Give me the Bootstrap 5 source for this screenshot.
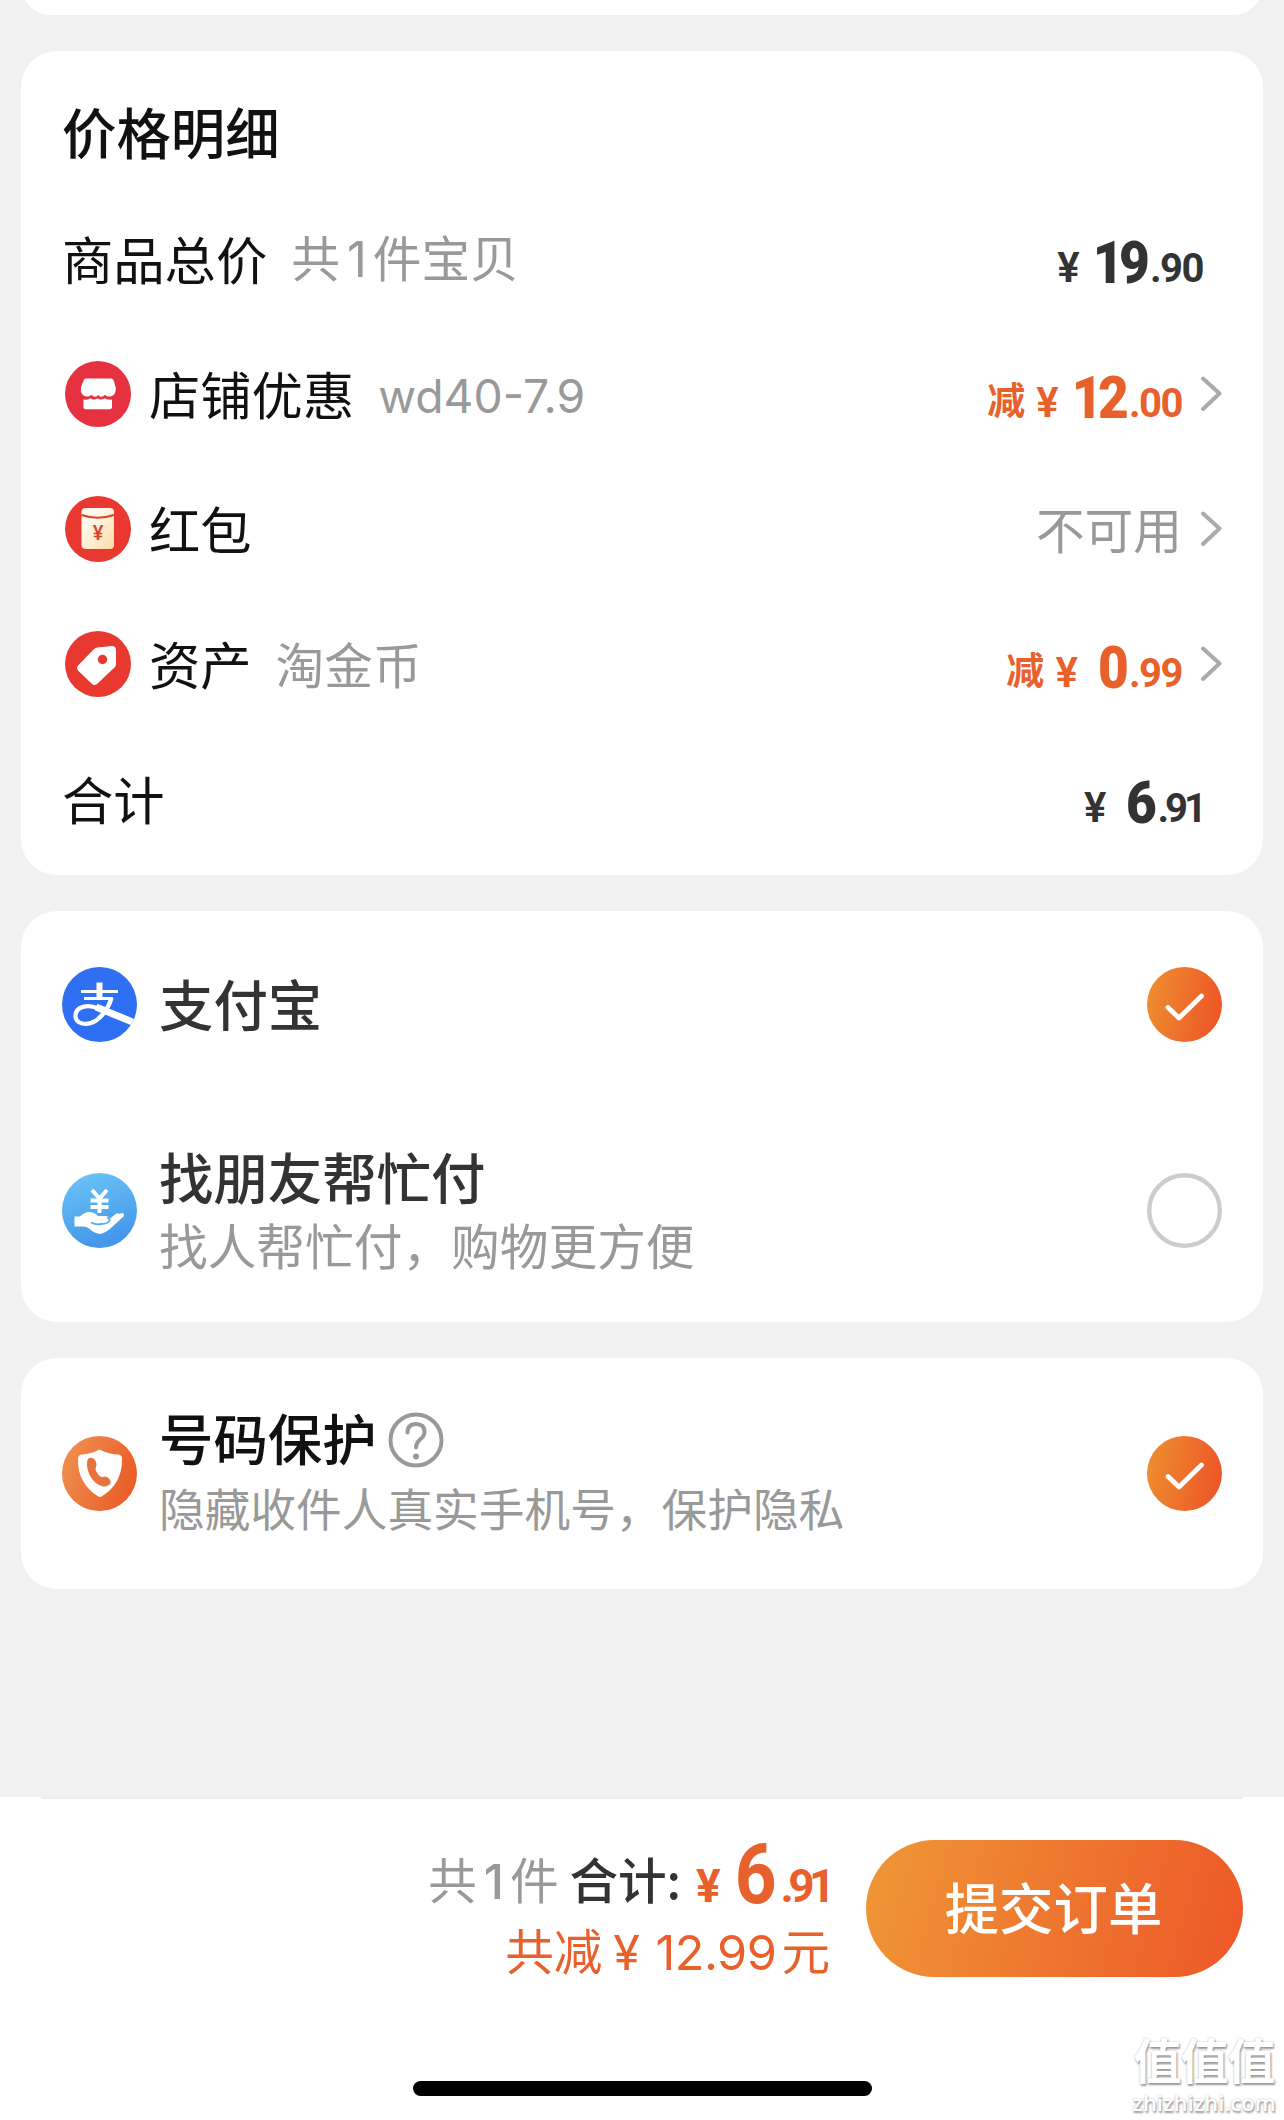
<!DOCTYPE html>
<html lang="zh-CN">
  <head>
    <meta charset="UTF-8" />
    <meta name="viewport" content="width=device-width, initial-scale=1" />
    <title>确认订单</title>
    <link
      href="https://cdn.jsdelivr.net/npm/bootstrap@5.3.3/dist/css/bootstrap.min.css"
      rel="stylesheet"
    />
    <style>
      body {
        background: #f1f1f1;
        color: #111;
        font-family: "Noto Sans CJK SC", sans-serif;
        overflow-x: hidden;
      }
      .page { width: 1284px; height: 2120px; overflow: hidden; }
      .panel { margin: 0 21px; border-radius: 36px; }
      .panel-prev { height: 60px; margin-top: -45px; }
      .panel-gap { margin-top: 36px; }
      .inner { padding-left: 41px; padding-right: 41px; }

      /* Rincian harga */
      .rincian { height: 824px; }
      .title { height: 140.5px; padding-top: 19px; line-height: 122px; font-size: 54.4px; font-weight: 500; }
      .line { height: 135px; }
      .line-icon { width: 66px; height: 66px; margin: 0 18px 0 3px; }
      .label { font-size: 51.3px; line-height: 60px; padding-bottom: 3px; }
      .note { font-size: 48.7px; line-height: 60px; padding-bottom: 3px; margin-left: 24px; color: #999; }
      .latin { font-family: Inter, sans-serif; }
      .one { margin: 0 6px 0 7px; }
      .wd { font-size: 46.3px; padding: 3px 0 0; }
      .price { font: 700 59px/60px Roboto, sans-serif; padding-top: 7px; color: #333; }
      .price b { display: inline-block; letter-spacing: -5px; transform: scaleX(0.9); transform-origin: right; }
      .price small, .price i { font-style: normal; line-height: 0; vertical-align: 1px; }
      .price small { font-size: 40px; letter-spacing: -1.5px; margin-left: 5px; }
      .price .tight { letter-spacing: -4px; }
      .price i { font-size: 42px; font-weight: 600; margin-right: 7px; }
      .price .solo { margin-right: 17px; }
      .price-end { margin-right: 19px; }
      .cut { font: 700 38px/0 "Noto Sans CJK SC", sans-serif; vertical-align: 4px; margin-right: 11px; }
      .orange { color: #e8602c !important; }
      .arrow { width: 22px; height: 36px; margin-left: 18px; }

      /* Metode bayar */
      .name { font-size: 54.4px; line-height: 70px; font-weight: 500; color: #333; }
      .desc { font-size: 48.7px; line-height: 66px; color: #999; }
      .desc-sm { font-size: 45.7px; line-height: 70px; }
      .texts { margin-left: 22px; padding-bottom: 3px; }
      .pick { width: 75px; height: 75px; }
      .help { width: 56px; height: 56px; margin: 5px 0 0 11px; }

      /* Bar bawah */
      .bottom { height: 323px; }
      .hair { height: 2px; margin: 0 41px; background: #ededed; }
      .bar { height: 178px; padding: 41px 41px 0 0; }
      .sum { font-size: 48.6px; line-height: 72px; margin-right: 36px; padding-top: 2px; }
      .sum .big {
        display: inline-block; font: 700 83px/0 Roboto, sans-serif; vertical-align: -4px;
        margin: 0 4px 0 8px; transform: scaleX(0.88); transform-origin: right;
      }
      .sum .mid { font: 700 46px/0 Roboto, sans-serif; vertical-align: -3px; letter-spacing: -5.5px; }
      .sum .yen { margin-left: 15px; letter-spacing: 0; }
      .saved { line-height: 62px; }
      .submit {
        width: 377px; height: 137px; border: 0; color: #fff;
        font-size: 54.4px; font-weight: 500; padding: 0 14px 6px 12px;
        background: linear-gradient(105deg, #ef9736, #ed5728);
      }
      .submit:hover { color: #fff; }
      .home { width: 459px; height: 15px; margin-top: 104px; }
      .stamp {
        right: 7px; bottom: 6px; width: 146px; color: #fff; text-align: center;
        text-shadow: 1px 2px 2px #999, 0 0 2px #bbb; white-space: nowrap;
      }
      .stamp b { font: 700 48px/55px "Liberation Sans", "Noto Sans CJK SC", sans-serif; letter-spacing: -1px; }
      .stamp span { font: 600 22px/24px "Open Sans", sans-serif; }
    </style>
  </head>
  <body>
    <div class="page position-relative d-flex flex-column">
      <div class="panel panel-prev bg-white flex-shrink-0"></div>

      <!-- Harga -->
      <section class="panel panel-gap inner rincian bg-white">
        <div class="title">价格明细</div>

        <div class="line d-flex align-items-center">
          <span class="label">商品总价</span>
          <span class="note">共<span class="latin one">1</span>件宝贝</span>
          <span class="price price-end ms-auto"><i>¥</i><b>19</b><small>.90</small></span>
        </div>

        <div class="line d-flex align-items-center">
          <svg class="line-icon" viewBox="0 0 66 66">
            <circle cx="33" cy="33" r="33" fill="#e63240" />
            <path d="M21 17.5h25q2 0 2.700 2l2 7q.5 8-5.200 9-3.500.5-5.500-1.800-3.300 4-6.800.2-3.400 3.800-6.800-.2-2.400 2.600-6 1.600-5.400-1.500-4.400-8.800l2.500-7q.7-2 2.500-2z" fill="#fff" />
            <path d="M18.500 38.500q3.800 1 7-1.200 3.500 2.600 7 0 3.500 2.600 7 0 3 2 7.500 1.200v7.300q0 2.500-2.500 2.500h-23.500q-2.500 0-2.500-2.500z" fill="#fff" />
          </svg>
          <span class="label">店铺优惠</span>
          <span class="note latin wd">wd40-7.9</span>
          <span class="price orange ms-auto"><span class="cut">减</span><i>¥</i><b>12</b><small>.00</small></span>
          <svg class="arrow" viewBox="0 0 22 36"><path d="M3 2.500 19.500 17.500 3 33" fill="none" stroke="#aaa" stroke-width="4" stroke-linecap="round" stroke-linejoin="round" /></svg>
        </div>

        <div class="line d-flex align-items-center">
          <svg class="line-icon" viewBox="0 0 66 66">
            <defs>
              <linearGradient id="paper" x1="0" y1="0" x2="1" y2="1">
                <stop offset="0.300" stop-color="#fff7ea" />
                <stop offset="1" stop-color="#fbdca4" />
              </linearGradient>
            </defs>
            <circle cx="33" cy="33" r="33" fill="#e8382f" />
            <rect x="16.500" y="12" width="32.500" height="41" rx="4" fill="url(#paper)" />
            <path d="M16.500 19q16 5.500 32.500 0" fill="none" stroke="#d8412f" stroke-width="2" />
            <text x="33" y="44" text-anchor="middle" font-family="Roboto" font-weight="500" font-size="20" fill="#d8412f">¥</text>
          </svg>
          <span class="label">红包</span>
          <span class="note ms-auto">不可用</span>
          <svg class="arrow" viewBox="0 0 22 36"><path d="M3 2.500 19.500 17.500 3 33" fill="none" stroke="#aaa" stroke-width="4" stroke-linecap="round" stroke-linejoin="round" /></svg>
        </div>

        <div class="line d-flex align-items-center">
          <svg class="line-icon" viewBox="0 0 66 66">
            <circle cx="33" cy="33" r="33" fill="#e8382f" />
            <path d="M32 16.500 47 15q4 0 4 4v14q0 2-1.500 3.500L32 53q-2.500 2-5 0L13 39.500q-2-2.500 0-5L28.500 18.500q1.500-1.700 3.500-2z" fill="#fff" />
            <circle cx="37.500" cy="28.500" r="4.700" fill="#e8382f" />
          </svg>
          <span class="label">资产</span>
          <span class="note">淘金币</span>
          <span class="price orange ms-auto"><span class="cut">减</span><i class="solo">¥</i><b>0</b><small>.99</small></span>
          <svg class="arrow" viewBox="0 0 22 36"><path d="M3 2.500 19.500 17.500 3 33" fill="none" stroke="#aaa" stroke-width="4" stroke-linecap="round" stroke-linejoin="round" /></svg>
        </div>

        <div class="line d-flex align-items-center">
          <span class="label">合计</span>
          <span class="price price-end ms-auto"><i class="solo">¥</i><b>6</b><small class="tight">.91</small></span>
        </div>
      </section>

      <!-- Pembayaran -->
      <section class="panel panel-gap inner bg-white">
        <div class="d-flex align-items-center" style="height: 187px">
          <svg class="pick" viewBox="0 0 75 75">
            <clipPath id="round"><circle cx="37.500" cy="37.500" r="37.500" /></clipPath>
            <circle cx="37.500" cy="37.500" r="37.500" fill="#2f6ff3" />
            <g fill="none" stroke="#fff" clip-path="url(#round)">
              <path d="M37.500 15.500V31" stroke-width="6" />
              <path d="M19 24.500H56M22 31.500H51" stroke-width="3.200" />
              <path d="M49.500 31C47 39 42 48 34 53.500 25 59.500 13.500 57 13.500 49 13.500 39 26 37 36.500 41.500" stroke-width="4.300" />
              <path d="M34 40 73 56" stroke-width="7" />
            </g>
          </svg>
          <div class="texts"><div class="name">支付宝</div></div>
          <svg class="pick ms-auto" viewBox="0 0 75 75">
            <defs>
              <linearGradient id="fire" x1="0" y1="0.400" x2="1" y2="0.600">
                <stop offset="0" stop-color="#ee8d2f" />
                <stop offset="1" stop-color="#ed5527" />
              </linearGradient>
            </defs>
            <circle cx="37.500" cy="37.500" r="37.500" fill="url(#fire)" />
            <path d="M21 40.500 32 51 54.500 29" fill="none" stroke="#fff" stroke-width="4.800" stroke-linecap="round" stroke-linejoin="round" />
          </svg>
        </div>
        <div class="d-flex align-items-center" style="height: 224px">
          <svg class="pick" viewBox="0 0 75 75">
            <defs>
              <linearGradient id="sky" x1="0" y1="0" x2="0.300" y2="1">
                <stop offset="0" stop-color="#6cc6f7" />
                <stop offset="1" stop-color="#4597ea" />
              </linearGradient>
            </defs>
            <circle cx="37.500" cy="37.500" r="37.500" fill="url(#sky)" />
            <path d="M30 17 37.500 25.500 45 17M28.500 27.500h18M28.500 34h18M37.500 25v15" fill="none" stroke="#fff" stroke-width="4" />
            <path d="M12.500 43.500H18Q23 38.500 28 39q5 .5 8 4h7.500q3.500 0 4 3l6-5q2.500-1.500 3.500 0l3-1q3 0 1.500 3.500L50 54Q44 60 37.500 61 32 60 27 55.500 25 53.500 21 53.500H12.500z" fill="#fff" />
            <path d="M29 49.500q5 2.500 10 1.500 7 0 8.500-3.500.5-2-2.500-3" fill="none" stroke="#55abef" stroke-width="1.800" />
          </svg>
          <div class="texts">
            <div class="name">找朋友帮忙付</div>
            <div class="desc">找人帮忙付，购物更方便</div>
          </div>
          <svg class="pick ms-auto" viewBox="0 0 75 75"><circle cx="37.500" cy="37.500" r="35.300" fill="none" stroke="#ccc" stroke-width="4.400" /></svg>
        </div>
      </section>

      <!-- Perlindungan nomor -->
      <section class="panel panel-gap inner bg-white d-flex align-items-center" style="height: 231px">
        <svg class="pick" viewBox="0 0 75 75">
          <defs>
            <linearGradient id="fire2" x1="0" y1="0.300" x2="1" y2="0.700">
              <stop offset="0" stop-color="#ee8f4e" />
              <stop offset="1" stop-color="#ea5a26" />
            </linearGradient>
          </defs>
          <circle cx="37.500" cy="37.500" r="37.500" fill="url(#fire2)" />
          <path d="M37.500 13.500Q47 18.500 57 18.500 60.500 19.500 60 24 60 48 39.500 60.500 37.500 61.500 35.500 60 15.500 47 16 23.500 16 19 19.500 18.500 29 18 37.500 13.500z" fill="#fff" />
          <path d="M26.500 22.500q3.500-2 6 1 3 4 1.500 7.500-1.500 2.500 1.500 6.500 2.500 4 5 3.500 3.500-1.500 7 2 2.500 4-.5 6-4 2.500-9 .5Q28 44.500 25.500 33q-1.500-8 1-10.500z" fill="#e9743b" />
        </svg>
        <div class="texts">
          <div class="name d-flex align-items-center" style="color: #111">
            号码保护
            <svg class="help" viewBox="0 0 56 56">
              <circle cx="28" cy="28" r="25.500" fill="none" stroke="#999" stroke-width="4" />
              <path d="M19.500 20.500q0-8.500 8.500-8.500t8.500 8q0 4-4.500 7.500-4 3.500-4 8" fill="none" stroke="#999" stroke-width="4" stroke-linecap="round" />
              <circle cx="28" cy="44.500" r="3" fill="#999" />
            </svg>
          </div>
          <div class="desc desc-sm">隐藏收件人真实手机号，保护隐私</div>
        </div>
        <svg class="pick ms-auto" viewBox="0 0 75 75">
          <circle cx="37.500" cy="37.500" r="37.500" fill="url(#fire)" />
          <path d="M21 40.500 32 51 54.500 29" fill="none" stroke="#fff" stroke-width="4.800" stroke-linecap="round" stroke-linejoin="round" />
        </svg>
      </section>

      <footer class="bottom bg-white mt-auto">
        <div class="hair"></div>
        <div class="bar d-flex justify-content-end">
          <div class="sum text-end text-nowrap">
            <div>
              <span style="color: #999">共<span class="latin one" style="font-weight: 500">1</span>件</span>
              <span style="color: #333; font-weight: 500">合计:</span><span class="orange"><span class="mid yen">¥</span><span class="big">6</span><span class="mid">.91</span></span>
            </div>
            <div class="orange saved">共减 <span class="latin" style="letter-spacing: -0.5px">¥<span style="margin-left: 16px">12.99</span></span><span style="margin-left: 5px">元</span></div>
          </div>
          <button class="submit btn rounded-pill">提交订单</button>
        </div>
        <div class="home bg-black rounded-pill mx-auto"></div>
      </footer>

      <div class="stamp position-absolute d-flex flex-column">
        <b>值值值</b>
        <span>zhizhizhi.com</span>
      </div>
    </div>

    <script src="https://cdn.jsdelivr.net/npm/bootstrap@5.3.3/dist/js/bootstrap.bundle.min.js"></script>
  </body>
</html>
